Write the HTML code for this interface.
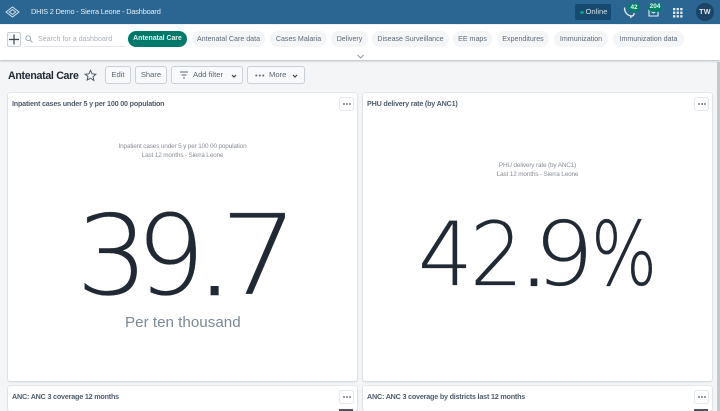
<!DOCTYPE html>
<html><head><meta charset="utf-8"><style>
*{box-sizing:border-box}
html,body{margin:0;padding:0;width:720px;height:411px;overflow:hidden;background:#f3f5f7;font-family:"Liberation Sans",sans-serif}
#root{position:absolute;left:0;top:0;width:720px;height:411px;overflow:hidden;background:#f3f5f7}
.a{position:absolute;white-space:nowrap}
#h{left:0;top:0;width:720px;height:24px;background:#2b6693}
#bar{left:0;top:25px;width:720px;height:35px;background:#fff;box-shadow:0 1px 2px rgba(0,0,0,.25)}
.chip{position:absolute;top:31px;height:16px;border-radius:8px;background:#f3f5f7;color:#5f6b78;font-size:7.1px;line-height:16px;text-align:center;white-space:nowrap}
.btn{position:absolute;top:66px;height:18px;border:1px solid #c9d0d8;border-radius:3px;background:#f8f9fa;color:#5a6570;font-size:7.6px;line-height:16px;text-align:center;white-space:nowrap}
.card{position:absolute;background:#fff;border-radius:2px;box-shadow:0 0 1px rgba(33,41,52,.3),0 1px 2px rgba(33,41,52,.12)}
.t{position:absolute;font-size:7.2px;letter-spacing:-.2px;font-weight:bold;color:#505c6b;white-space:nowrap}
.dots{position:absolute;width:15px;height:14px;border:1px solid #e4e7eb;border-radius:3px;background:#fff}
.dots svg{position:absolute;left:3px;top:4px}
.sub{position:absolute;font-size:6.4px;letter-spacing:-.15px;color:#8a8f96;text-align:center;white-space:nowrap;line-height:9px}
.big{position:absolute;color:#212934;white-space:nowrap;line-height:1;font-family:"DejaVu Sans",sans-serif;font-weight:200;transform-origin:0 0;-webkit-text-stroke:.3px #212934}
.b1{top:201px;font-size:111px}
.b2{top:211px;font-size:88px}
</style></head><body><div id="root">
<div class="a" id="h"></div>
<svg class="a" style="left:5px;top:6px" width="15" height="12" viewBox="0 0 15 12" fill="none" stroke="#cfe0ec" stroke-width="1"><path d="M7.5 1 14 6l-6.5 5L1 6z"/><path d="M7.5 3.6 10.8 6 7.5 8.4 4.2 6z"/></svg>
<div class="a" style="left:31px;top:7px;font-size:7.4px;letter-spacing:-.2px;line-height:10px;color:#e4edf3">DHIS 2 Demo - Sierra Leone - Dashboard</div>
<div class="a" style="left:575px;top:4px;width:36px;height:16px;background:#164a70;border-radius:2px"></div>
<div class="a" style="left:580px;top:10.5px;width:3.5px;height:3.5px;border-radius:50%;background:#0f9d7c"></div>
<div class="a" style="left:585.5px;top:7px;font-size:7.6px;line-height:10px;color:#d5e0e9">Online</div>
<svg class="a" style="left:622px;top:5px" width="14" height="14" viewBox="0 0 14 14" fill="none" stroke="#e8f0f5" stroke-width="1.3"><path d="M2.5 2.5C2.5 7 5 10.5 9.5 11c1.5 0 3-1 2.5-3"/><path d="M8.5 11l.5 2"/></svg>
<div class="a" style="left:628px;top:3px;width:12px;height:9px;border-radius:5px;background:#00806a;color:#e8f5f1;font-size:6.4px;font-weight:bold;line-height:9px;text-align:center">42</div>
<svg class="a" style="left:648px;top:8px" width="11" height="9" viewBox="0 0 11 9" fill="none" stroke="#e8f0f5" stroke-width="1.1"><path d="M1 1v7h9V1"/><path d="M1.5 2l4 3 4-3"/></svg>
<div class="a" style="left:648px;top:3px;width:14px;height:8.5px;border-radius:4.5px;background:#00806a;color:#e8f5f1;font-size:6.4px;font-weight:bold;line-height:8.5px;text-align:center">204</div>
<svg class="a" style="left:673px;top:8px" width="10" height="10" viewBox="0 0 10 10" fill="#e4edf3"><rect x="0" y="0" width="2.3" height="2.3"/><rect x="3.6" y="0" width="2.3" height="2.3"/><rect x="7.2" y="0" width="2.3" height="2.3"/><rect x="0" y="3.6" width="2.3" height="2.3"/><rect x="3.6" y="3.6" width="2.3" height="2.3"/><rect x="7.2" y="3.6" width="2.3" height="2.3"/><rect x="0" y="7.2" width="2.3" height="2.3"/><rect x="3.6" y="7.2" width="2.3" height="2.3"/><rect x="7.2" y="7.2" width="2.3" height="2.3"/></svg>
<div class="a" style="left:696px;top:3px;width:18px;height:18px;border-radius:50%;background:#1c4464;color:#dfe8ee;font-size:7.2px;font-weight:bold;line-height:18px;text-align:center;letter-spacing:.3px">TW</div>

<div class="a" id="bar"></div>
<div class="a" style="left:7px;top:32px;width:14px;height:15px;border:1px solid #c9d0d8;border-radius:2px;background:#f8f9fa"></div>
<svg class="a" style="left:9px;top:34px" width="10" height="11" viewBox="0 0 10 11" stroke="#3a4450" stroke-width="1.2"><path d="M5 .5v10M0 5.5h10"/></svg>
<svg class="a" style="left:25px;top:35px" width="8" height="8" viewBox="0 0 8 8" fill="none" stroke="#9aa3ad" stroke-width=".9"><circle cx="3.2" cy="3.2" r="2.4"/><path d="M5 5l2.5 2.5"/></svg>
<div class="a" style="left:38px;top:34px;font-size:7.1px;line-height:10px;color:#a9b0b8">Search for a dashboard</div>
<div class="a" style="left:25px;top:46px;width:101px;height:1px;background:#e3e6ea"></div>
<div class="chip" style="left:128px;width:59px;background:#00796b;color:#e3f2ef;font-weight:bold;font-size:6.9px">Antenatal Care</div>
<div class="chip" style="left:192px;width:73px">Antenatal Care data</div>
<div class="chip" style="left:270px;width:57px">Cases Malaria</div>
<div class="chip" style="left:331px;width:37px">Delivery</div>
<div class="chip" style="left:372px;width:77px">Disease Surveillance</div>
<div class="chip" style="left:453px;width:39px">EE maps</div>
<div class="chip" style="left:497px;width:52px">Expenditures</div>
<div class="chip" style="left:554px;width:54px">Immunization</div>
<div class="chip" style="left:613px;width:71px">Immunization data</div>
<svg class="a" style="left:357px;top:54px" width="7" height="5" viewBox="0 0 7 5" fill="none" stroke="#8b949e" stroke-width=".9"><path d="M.5 1l3 3 3-3"/></svg>

<div class="a" style="left:8px;top:69px;font-size:10.6px;letter-spacing:-.3px;line-height:14px;font-weight:bold;color:#212934">Antenatal Care</div>
<svg class="a" style="left:84px;top:69px" width="13" height="13" viewBox="0 0 24 24" fill="none" stroke="#4a5768" stroke-width="1.8"><path d="M12 2.5l2.9 6.4 7 .8-5.2 4.7 1.5 6.9L12 16.9l-6.2 3.5 1.5-6.9L2.1 9.7l7-.8z"/></svg>
<div class="btn" style="left:105px;width:26px">Edit</div>
<div class="btn" style="left:135px;width:32px">Share</div>
<div class="btn" style="left:171px;width:72px;text-align:left;padding-left:21px">Add filter</div>
<svg class="a" style="left:179px;top:71px" width="10" height="8" viewBox="0 0 10 8" stroke="#5a6570" stroke-width="1"><path d="M1 1h8M2.5 4h5M4 7h2"/></svg>
<svg class="a" style="left:231px;top:73.5px" width="6" height="4" viewBox="0 0 6 4" fill="none" stroke="#3a4450" stroke-width="1.2"><path d="M1 1l2 2 2-2"/></svg>
<div class="btn" style="left:247px;width:58px;text-align:left;padding-left:21px">More</div>
<svg class="a" style="left:255px;top:74px" width="10" height="3" viewBox="0 0 10 3" fill="#5a6570"><circle cx="1.3" cy="1.5" r="1"/><circle cx="4.8" cy="1.5" r="1"/><circle cx="8.3" cy="1.5" r="1"/></svg>
<svg class="a" style="left:292px;top:73.5px" width="6" height="4" viewBox="0 0 6 4" fill="none" stroke="#3a4450" stroke-width="1.2"><path d="M1 1l2 2 2-2"/></svg>

<div class="a" style="left:717px;top:62px;width:3px;height:349px;background:#c4c8cc"></div>

<div class="card" style="left:8px;top:93px;width:349px;height:288px"></div>
<div class="card" style="left:363px;top:93px;width:349px;height:288px"></div>
<div class="card" style="left:8px;top:386px;width:349px;height:25px"></div>
<div class="card" style="left:363px;top:386px;width:349px;height:25px"></div>

<div class="t" style="left:12px;top:99px;line-height:10px">Inpatient cases under 5 y per 100 00 population</div>
<div class="t" style="left:367px;top:99px;line-height:10px">PHU delivery rate (by ANC1)</div>
<div class="t" style="left:12px;top:392px;line-height:10px">ANC: ANC 3 coverage 12 months</div>
<div class="t" style="left:367px;top:392px;line-height:10px">ANC: ANC 3 coverage by districts last 12 months</div>

<div class="dots" style="left:339px;top:97px"><svg width="8" height="4" viewBox="0 0 8 4" fill="#4a5768"><circle cx="1" cy="2" r=".9"/><circle cx="4" cy="2" r=".9"/><circle cx="7" cy="2" r=".9"/></svg></div>
<div class="dots" style="left:694px;top:97px"><svg width="8" height="4" viewBox="0 0 8 4" fill="#4a5768"><circle cx="1" cy="2" r=".9"/><circle cx="4" cy="2" r=".9"/><circle cx="7" cy="2" r=".9"/></svg></div>
<div class="dots" style="left:339px;top:390px"><svg width="8" height="4" viewBox="0 0 8 4" fill="#4a5768"><circle cx="1" cy="2" r=".9"/><circle cx="4" cy="2" r=".9"/><circle cx="7" cy="2" r=".9"/></svg></div>
<div class="dots" style="left:694px;top:390px"><svg width="8" height="4" viewBox="0 0 8 4" fill="#4a5768"><circle cx="1" cy="2" r=".9"/><circle cx="4" cy="2" r=".9"/><circle cx="7" cy="2" r=".9"/></svg></div>
<div class="a" style="left:339px;top:409px;width:14px;height:2px;background:#4a5560"></div>
<div class="a" style="left:694px;top:409px;width:14px;height:2px;background:#4a5560"></div>

<div class="sub" style="left:8px;width:349px;top:142px">Inpatient cases under 5 y per 100 00 population<br>Last 12 months - Sierra Leone</div>
<div class="sub" style="left:363px;width:349px;top:161px">PHU delivery rate (by ANC1)<br>Last 12 months - Sierra Leone</div>

<div class="big b1" style="left:76px;transform:scaleX(1.03)">3</div>
<div class="big b1" style="left:136px;transform:scaleX(.98)">9</div>
<div class="big b1" style="left:197px;-webkit-text-stroke:2.5px #212934">.</div>
<div class="big b1" style="left:219.5px;transform:scaleX(1.11)">7</div>
<div class="a" style="left:125px;top:314px;font-size:15.2px;line-height:18px;color:#7b8998">Per ten thousand</div>

<div class="big b2" style="left:418px;transform:scaleX(.98)">4</div>
<div class="big b2" style="left:470px;transform:scaleX(.95)">2</div>
<div class="big b2" style="left:520px;-webkit-text-stroke:2.2px #212934">.</div>
<div class="big b2" style="left:534px;transform:scaleX(1.07)">9</div>
<div class="big b2" style="left:591px;transform:scaleX(.79)">%</div>
</div></body></html>
